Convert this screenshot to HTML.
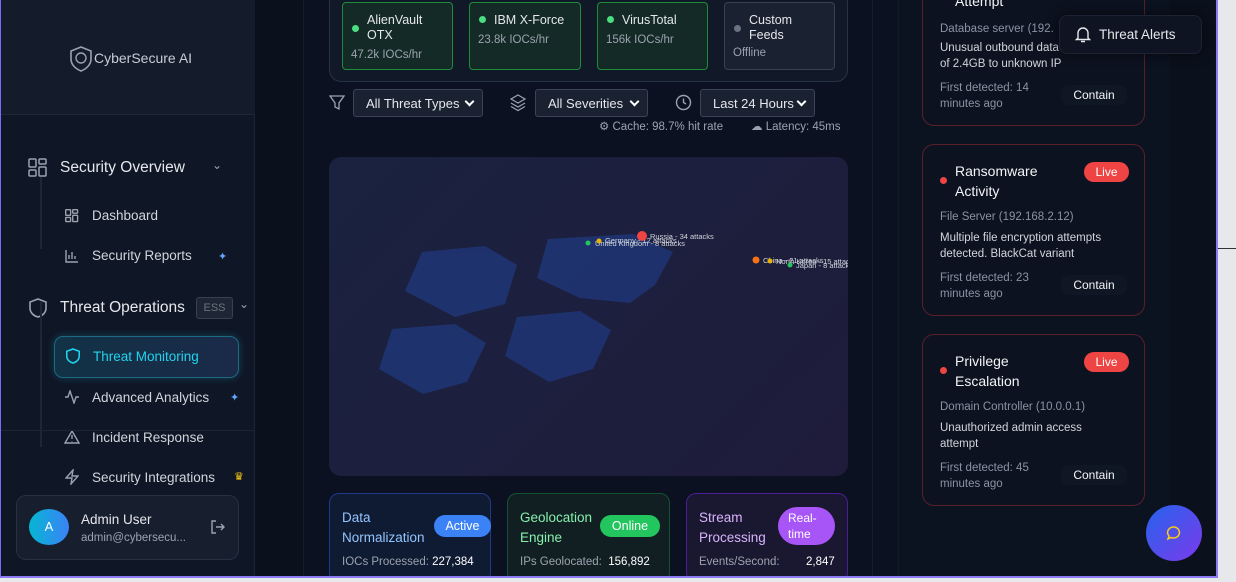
<!DOCTYPE html>
<html><head><meta charset="utf-8"><style>
*{margin:0;padding:0;box-sizing:border-box}
body{width:1236px;height:582px;overflow:hidden;background:#e8e9ec;font-family:"Liberation Sans",sans-serif;position:relative}
.a{position:absolute}
#frame{left:0;top:0;width:1218px;height:578px;background:#0a101c;overflow:hidden}
#bord{left:0;top:0;width:1218px;height:578px;border-left:1px solid #7c6cf0;border-bottom:2px solid #8b7cf6;border-right:2px solid #8b7cf6;pointer-events:none}
.t{color:#e5e7eb;white-space:nowrap}
.feed{top:2px;height:68px;border:1px solid #1f8a3c;background:#142a26;border-radius:4px;font-size:12.5px;color:#e5e7eb}
.feed .d{position:absolute;left:9px;width:7px;height:7px;border-radius:50%;background:#4ade80}
.sel{top:89px;height:28px;border:1px solid #3a4456;background:#1a2130;border-radius:3px;color:#e5e7eb;font-size:13px;padding:6px 12px}
.sel:after{content:"";position:absolute;right:9px;top:8px;width:5px;height:5px;border-right:2px solid #fff;border-bottom:2px solid #fff;transform:rotate(45deg)}
.alert{left:922px;width:223px;border:1px solid #5b1f2c;border-radius:12px;background:#0c1220}
.alert .ttl{position:absolute;left:32px;font-size:14px;color:#f3f4f6;line-height:20px}
.alert .rd{position:absolute;left:17px;width:7px;height:7px;border-radius:50%;background:#ef4444}
.live{position:absolute;left:161px;width:45px;height:20px;border-radius:10px;background:#ef4444;color:#fff;font-size:12px;text-align:center;line-height:20px}
.sm{position:absolute;left:17px;font-size:11.5px;color:#8b93a3;line-height:16px;white-space:nowrap}
.bd{position:absolute;left:17px;font-size:11.5px;color:#d1d5db;line-height:16px}
.ct{position:absolute;left:138px;width:66px;height:20px;border-radius:8px;background:#0f1624;color:#f3f4f6;font-size:12px;text-align:center;line-height:20px}
.nav{font-size:13.5px;color:#d1d5db}
.bc{top:493px;height:90px;border-radius:10px}
</style></head><body>
<div id="frame" class="a">
 <div class="a" style="left:0;top:0;width:255px;height:578px;background:#0f1626;border-right:1px solid #1c2435"></div>
 <div class="a" style="left:0;top:0;width:255px;height:115px;background:#141b2b;border-bottom:1px solid #1f2737"></div>
 <svg class="a" style="left:69px;top:46px" width="24" height="26" viewBox="0 0 24 26"><path d="M12 1 L22 5 V13 C22 19 17 23 12 25 C7 23 2 19 2 13 V5 Z" fill="none" stroke="#9ca3af" stroke-width="1.6"/><circle cx="12" cy="12" r="5" fill="none" stroke="#9ca3af" stroke-width="1.4"/></svg>
 <div class="a t" style="left:94px;top:50px;font-size:14px;color:#c7ccd4">CyberSecure AI</div>
 <svg class="a" style="left:28px;top:158px" width="20" height="20" viewBox="0 0 20 20" fill="none" stroke="#9ca3af" stroke-width="1.5"><rect x="1" y="1" width="7" height="8" rx="1"/><rect x="11" y="1" width="7" height="5" rx="1"/><rect x="1" y="12" width="7" height="6" rx="1"/><rect x="11" y="9" width="7" height="9" rx="1"/></svg>
 <div class="a t" style="left:60px;top:159px;font-size:15.5px">Security Overview</div>
 <div class="a t" style="left:212px;top:158px;font-size:12px;color:#9ca3af">&#8964;</div>
 <div class="a" style="left:40px;top:177px;width:2px;height:72px;background:#1f2737"></div>
 <svg class="a" style="left:65px;top:209px" width="14" height="14" viewBox="0 0 20 20" fill="none" stroke="#9ca3af" stroke-width="2"><rect x="1" y="1" width="7" height="8" rx="1"/><rect x="11" y="1" width="7" height="5" rx="1"/><rect x="1" y="12" width="7" height="6" rx="1"/><rect x="11" y="9" width="7" height="9" rx="1"/></svg>
 <div class="a t nav" style="left:92px;top:208px">Dashboard</div>
 <svg class="a" style="left:65px;top:249px" width="14" height="14" viewBox="0 0 14 14" fill="none" stroke="#9ca3af" stroke-width="1.4"><path d="M1 1V13H13M4 10V6M7 10V3M10 10V7"/></svg>
 <div class="a t nav" style="left:92px;top:248px">Security Reports</div>
 <div class="a" style="left:218px;top:250px;color:#60a5fa;font-size:11px">✦</div>
 <svg class="a" style="left:29px;top:298px" width="18" height="20" viewBox="0 0 18 20" fill="none" stroke="#9ca3af" stroke-width="1.6"><path d="M9 1L17 4V10C17 15 13 18 9 19C5 18 1 15 1 10V4Z"/></svg>
 <div class="a t" style="left:60px;top:299px;font-size:15.5px">Threat Operations</div>
 <div class="a" style="left:196px;top:297px;width:37px;height:22px;border:1px solid #374151;background:#1f2633;border-radius:3px;color:#6b7280;font-size:11px;text-align:center;line-height:20px">ESS</div>
 <div class="a t" style="left:239px;top:297px;font-size:12px;color:#9ca3af">&#8964;</div>
 <div class="a" style="left:40px;top:302px;width:2px;height:145px;background:#1f2737"></div>
 <div class="a" style="left:54px;top:336px;width:185px;height:42px;border:1px solid #1e6a84;border-radius:9px;background:linear-gradient(90deg,#123246,#1a2a48);box-shadow:0 0 8px rgba(34,211,238,.25)"></div>
 <svg class="a" style="left:66px;top:348px" width="14" height="16" viewBox="0 0 18 20" fill="none" stroke="#22d3ee" stroke-width="2"><path d="M9 1L17 4V10C17 15 13 18 9 19C5 18 1 15 1 10V4Z"/></svg>
 <div class="a t" style="left:93px;top:349px;font-size:13.5px;color:#22d3ee">Threat Monitoring</div>
 <svg class="a" style="left:64px;top:390px" width="16" height="14" viewBox="0 0 16 14" fill="none" stroke="#9ca3af" stroke-width="1.4"><path d="M1 7H4L6 1L10 13L12 7H15"/></svg>
 <div class="a t nav" style="left:92px;top:390px">Advanced Analytics</div>
 <div class="a" style="left:230px;top:391px;color:#60a5fa;font-size:11px">✦</div>
 <svg class="a" style="left:64px;top:430px" width="16" height="14" viewBox="0 0 16 14" fill="none" stroke="#9ca3af" stroke-width="1.4"><path d="M8 1L15 13H1Z M8 5V9 M8 11V11.5"/></svg>
 <div class="a t nav" style="left:92px;top:430px">Incident Response</div>
 <svg class="a" style="left:65px;top:469px" width="14" height="16" viewBox="0 0 14 16" fill="none" stroke="#9ca3af" stroke-width="1.4"><path d="M8 1L1 9H7L6 15L13 7H7Z"/></svg>
 <div class="a t nav" style="left:92px;top:470px">Security Integrations</div>
 <div class="a" style="left:234px;top:470px;color:#facc15;font-size:11px">♛</div>
 <div class="a" style="left:0;top:430px;width:255px;height:1px;background:#1c2435"></div>
 <div class="a" style="left:16px;top:495px;width:223px;height:65px;border:1px solid #283042;border-radius:10px;background:#171e2d"></div>
 <div class="a" style="left:29px;top:509px;width:40px;height:36px;border-radius:50%;background:linear-gradient(90deg,#06b6d4,#3b82f6);color:#fff;font-size:13px;text-align:center;line-height:36px">A</div>
 <div class="a t" style="left:81px;top:512px;font-size:13.5px">Admin User</div>
 <div class="a t" style="left:81px;top:532px;font-size:11.5px;color:#9ca3af">admin@cybersecu...</div>
 <svg class="a" style="left:210px;top:520px" width="16" height="14" viewBox="0 0 16 14" fill="none" stroke="#9ca3af" stroke-width="1.4"><path d="M6 1H2V13H6M6 7H14M11 4L14 7L11 10"/></svg>
 <div class="a" style="left:256px;top:0;width:48px;height:578px;background:#0b111c;border-right:1px solid #151c29"></div>
 <div class="a" style="left:305px;top:0;width:568px;height:578px;background:#0b1120;border-right:1px solid #161d2b"></div>
 <div class="a" style="left:329px;top:-10px;width:519px;height:92px;border:1px solid #283245;border-radius:12px;background:#111827"></div>
 <div class="a feed" style="left:342px;width:111px"><span class="d" style="top:22px"></span><div class="a" style="left:24px;top:10px;line-height:15px">AlienVault<br>OTX</div><div class="a" style="left:8px;top:46px;font-size:11.5px;color:#9ca3af">47.2k IOCs/hr</div></div>
 <div class="a feed" style="left:469px;width:112px"><span class="d" style="top:13px"></span><div class="a" style="left:24px;top:10px">IBM X-Force</div><div class="a" style="left:8px;top:31px;font-size:11.5px;color:#9ca3af">23.8k IOCs/hr</div></div>
 <div class="a feed" style="left:597px;width:111px"><span class="d" style="top:13px"></span><div class="a" style="left:24px;top:10px">VirusTotal</div><div class="a" style="left:8px;top:31px;font-size:11.5px;color:#9ca3af">156k IOCs/hr</div></div>
 <div class="a feed" style="left:724px;width:111px;border-color:#3a4252;background:#1a2130"><span class="d" style="top:22px;background:#6b7280"></span><div class="a" style="left:24px;top:10px;line-height:15px">Custom<br>Feeds</div><div class="a" style="left:8px;top:44px;font-size:11.5px;color:#9ca3af">Offline</div></div>
 <svg class="a" style="left:329px;top:95px" width="16" height="16" viewBox="0 0 16 16" fill="none" stroke="#9ca3af" stroke-width="1.3"><path d="M1 1H15L10 8V14L6 12V8Z"/></svg>
 <div class="a sel" style="left:353px;width:130px">All Threat Types</div>
 <svg class="a" style="left:510px;top:94px" width="16" height="18" viewBox="0 0 16 18" fill="none" stroke="#9ca3af" stroke-width="1.2"><path d="M8 1L15 5L8 9L1 5Z M1 9L8 13L15 9 M1 12.5L8 16.5L15 12.5"/></svg>
 <div class="a sel" style="left:535px;width:113px">All Severities</div>
 <svg class="a" style="left:675px;top:94px" width="17" height="17" viewBox="0 0 17 17" fill="none" stroke="#9ca3af" stroke-width="1.4"><circle cx="8.5" cy="8.5" r="7"/><path d="M8.5 4.5V8.5L11 10"/></svg>
 <div class="a sel" style="left:700px;width:115px">Last 24 Hours</div>
 <div class="a t" style="left:599px;top:119px;font-size:11.5px;color:#9ca3af">⚙ Cache: 98.7% hit rate</div>
 <div class="a t" style="left:751px;top:119px;font-size:11.5px;color:#9ca3af">☁ Latency: 45ms</div>
 <div class="a" style="left:329px;top:157px;width:519px;height:319px;border-radius:12px;background:linear-gradient(135deg,#1a2240,#1e1c3a)"></div>
 <svg class="a" style="left:0;top:0" width="848" height="500">
  <g fill="#1f3370" opacity=".95">
   <polygon points="422,252 485,246 517,265 505,304 455,317 405,291"/>
   <polygon points="548,239 633,234 673,252 655,285 630,303 580,298 537,278"/>
   <polygon points="392,329 455,324 486,343 467,382 423,394 379,369"/>
   <polygon points="517,317 580,311 611,330 593,369 549,382 505,356"/>
  </g>
  <g font-family="Liberation Sans" font-size="7.5" fill="#d1d5db">
   <circle cx="588" cy="243" r="2.5" fill="#22c55e"/><text x="595" y="246">United Kingdom - 8 attacks</text>
   <circle cx="599" cy="241" r="2.5" fill="#eab308"/><text x="605" y="243">Germany - 12 attacks</text>
   <circle cx="642" cy="236" r="5" fill="#ef4444"/><text x="650" y="239">Russia - 34 attacks</text>
   <circle cx="756" cy="260" r="3.5" fill="#f97316"/><text x="763" y="263">China - 21 attacks</text>
   <circle cx="770" cy="261" r="2.5" fill="#eab308"/><text x="776" y="264">North Korea - 15 attacks</text>
   <circle cx="790" cy="265" r="2.5" fill="#22c55e"/><text x="796" y="268">Japan - 8 attacks</text>
  </g>
 </svg>
 <div class="a bc" style="left:329px;width:162px;border:1px solid #1e3a8a;background:#0f1a33"></div>
 <div class="a t" style="left:342px;top:508px;font-size:13.5px;color:#93c5fd;line-height:20px">Data<br>Normalization</div>
 <div class="a" style="left:434px;top:515px;width:57px;height:22px;border-radius:11px;background:#3b82f6;color:#fff;font-size:12.5px;text-align:center;line-height:22px">Active</div>
 <div class="a t" style="left:342px;top:556px;font-size:11.5px;color:#9ca3af">IOCs Processed: <span style="color:#fff">227,384</span></div>
 <div class="a bc" style="left:507px;width:163px;border:1px solid #14532d;background:#111f22"></div>
 <div class="a t" style="left:520px;top:508px;font-size:13.5px;color:#86efac;line-height:20px">Geolocation<br>Engine</div>
 <div class="a" style="left:600px;top:515px;width:60px;height:22px;border-radius:11px;background:#22c55e;color:#fff;font-size:12.5px;text-align:center;line-height:22px">Online</div>
 <div class="a t" style="left:520px;top:556px;font-size:11.5px;color:#9ca3af">IPs Geolocated: &nbsp;<span style="color:#fff">156,892</span></div>
 <div class="a bc" style="left:686px;width:162px;border:1px solid #4c1d95;background:#1a1730"></div>
 <div class="a t" style="left:699px;top:508px;font-size:13.5px;color:#d8b4fe;line-height:20px">Stream<br>Processing</div>
 <div class="a" style="left:778px;top:507px;width:57px;height:38px;border-radius:19px;background:#a855f7;color:#fff;font-size:12px;line-height:16px;padding:3px 0 0 10px">Real-<br>time</div>
 <div class="a t" style="left:699px;top:556px;font-size:11.5px;color:#9ca3af">Events/Second:</div>
 <div class="a t" style="left:806px;top:556px;font-size:11.5px;color:#fff">2,847</div>
 <div class="a" style="left:874px;top:0;width:295px;height:578px;background:#0b1120;border-right:1px solid #1a2130"></div>
 <div class="a" style="left:898px;top:0;width:272px;height:578px;background:#0b1220;border-left:1px solid #131a27"></div>
 <div class="a alert" style="top:-20px;height:146px">
  <div class="ttl" style="top:10px;left:32px">Attempt</div>
  <div class="sm" style="top:40px">Database server (192.</div>
  <div class="bd" style="top:59px">Unusual outbound data<br>of 2.4GB to unknown IP</div>
  <div class="sm" style="top:99px">First detected: 14<br>minutes ago</div>
  <div class="ct" style="top:104px">Contain</div>
 </div>
 <div class="a alert" style="top:144px;height:172px">
  <span class="rd" style="top:32px"></span>
  <div class="ttl" style="top:16px">Ransomware<br>Activity</div>
  <div class="live" style="top:17px">Live</div>
  <div class="sm" style="top:64px">File Server (192.168.2.12)</div>
  <div class="bd" style="top:85px">Multiple file encryption attempts<br>detected. BlackCat variant</div>
  <div class="sm" style="top:125px">First detected: 23<br>minutes ago</div>
  <div class="ct" style="top:130px">Contain</div>
 </div>
 <div class="a alert" style="top:334px;height:172px">
  <span class="rd" style="top:32px"></span>
  <div class="ttl" style="top:16px">Privilege<br>Escalation</div>
  <div class="live" style="top:17px">Live</div>
  <div class="sm" style="top:64px">Domain Controller (10.0.0.1)</div>
  <div class="bd" style="top:85px">Unauthorized admin access<br>attempt</div>
  <div class="sm" style="top:125px">First detected: 45<br>minutes ago</div>
  <div class="ct" style="top:130px">Contain</div>
 </div>
 <div class="a" style="left:1059px;top:15px;width:143px;height:39px;border:1px solid #1c2333;border-radius:8px;background:#0e1422;box-shadow:0 0 12px rgba(0,0,0,.6)"></div>
 <svg class="a" style="left:1075px;top:26px" width="16" height="17" viewBox="0 0 16 17" fill="none" stroke="#e5e7eb" stroke-width="1.4"><path d="M3 12V7A5 5 0 0 1 13 7V12L14.5 13.5H1.5Z M6 15.5H10"/></svg>
 <div class="a t" style="left:1099px;top:27px;font-size:13.5px">Threat Alerts</div>
 <div class="a" style="left:1146px;top:505px;width:56px;height:56px;border-radius:50%;background:linear-gradient(135deg,#2563eb,#7c3aed)"></div>
 <svg class="a" style="left:1166px;top:525px" width="16" height="16" viewBox="0 0 16 16" fill="none" stroke="#facc15" stroke-width="1.5"><path d="M8 2A6 5.5 0 1 1 5 12.5L2 14L3 11A6 5.5 0 0 1 8 2Z"/></svg>
</div>
<div id="bord" class="a"></div>
<div class="a" style="left:1218px;top:0;width:18px;height:582px;background:#e7e8eb"></div>
<div class="a" style="left:1218px;top:248px;width:18px;height:1px;background:#333"></div>
</body></html>
